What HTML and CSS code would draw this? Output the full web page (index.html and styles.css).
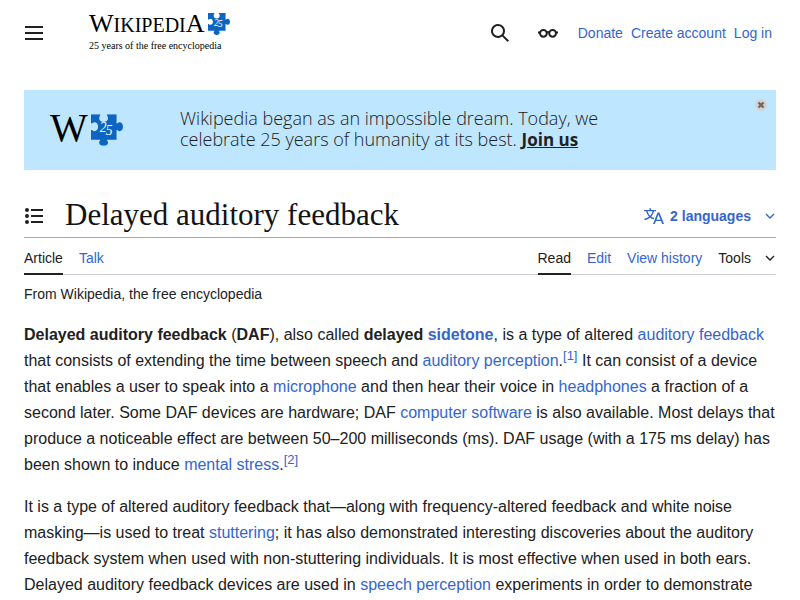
FILE: index.html
```
<!DOCTYPE html>
<html lang="en">
<head>
<meta charset="utf-8">
<meta name="viewport" content="width=device-width, initial-scale=1">
<title>Delayed auditory feedback - Wikipedia</title>
<link rel="stylesheet" href="styles.css">
</head>
<body>

<!-- puzzle piece, used in the logo and in the banner -->
<svg class="defs" aria-hidden="true">
	<symbol id="puzzle" viewBox="0 0 94 93">
		<path d="M0 0H27C29 4 24 5 24 11C24 18 30 23 37 23S50 18 50 11C50 5 45 4 47 0H75V27C79 29 78 24 84 24C90 24 94 30 94 37S90 50 84 50C78 50 79 45 75 47V75H47C45 78 50 77 50 83C50 89 44 93 37 93S24 89 24 83C24 77 29 78 27 75H0V47C4 45 5 50 10 50C17 50 21 44 21 37S17 24 10 24C5 24 4 29 0 27Z"/>
	</symbol>
</svg>

<header class="header">
	<button class="icon-button" aria-label="Main menu">
		<svg width="20" height="20" viewBox="0 0 20 20"><path d="M1 3v2h18V3zm0 8h18V9H1zm0 6h18v-2H1z"/></svg>
	</button>
	<a class="logo" href="#">
		<span class="logo-name"><span class="wordmark"><span class="cap">W</span>IKIPEDI<span class="cap">A</span></span><svg class="logo-puzzle" viewBox="0 0 94 93"><use href="#puzzle"/><text x="26" y="53">2</text><text x="43" y="60">5</text></svg></span>
		<span class="tagline">25 years of the free encyclopedia</span>
	</a>
	<nav class="user-links">
		<button class="icon-button" aria-label="Search">
			<svg width="20" height="20" viewBox="0 0 20 20"><path d="M12.2 13.6a7 7 0 1 1 1.4-1.4l5.4 5.4-1.4 1.4zM3 8a5 5 0 1 0 10 0A5 5 0 0 0 3 8"/></svg>
		</button>
		<button class="icon-button glasses" aria-label="Appearance">
			<svg width="20" height="20" viewBox="0 0 20 20"><g fill="none" stroke="#202122" stroke-width="2"><circle cx="5.4" cy="10.3" r="3.4"/><circle cx="14.6" cy="10.3" r="3.4"/><path d="M8.5 9.5q1.5-1 3 0M0 9.5h2.3M17.7 9.5H20"/></g></svg>
		</button>
		<a href="#">Donate</a>
		<a href="#">Create account</a>
		<a href="#">Log in</a>
	</nav>
</header>

<div class="banner">
	<div class="banner-logo">
		<span class="banner-w">W</span>
		<svg class="banner-puzzle" viewBox="0 0 94 93"><use href="#puzzle"/><text x="26" y="53">2</text><text x="43" y="60">5</text></svg>
	</div>
	<p class="banner-text">Wikipedia began as an impossible dream. Today, we celebrate 25 years of humanity at its best. <a href="#">Join us</a></p>
	<button class="banner-close" aria-label="Close">
		<svg width="12" height="12" viewBox="0 0 12 12"><circle cx="6" cy="6" r="6" fill="#d2d3d2"/><path d="M3.5 3.5l5 5M8.5 3.5l-5 5" stroke="#6f6964" stroke-width="2.4"/></svg>
	</button>
</div>

<main class="content">
	<div class="title-bar">
		<button class="icon-button" aria-label="Table of contents">
			<svg width="20" height="20" viewBox="0 0 20 20"><path d="M7 15h12v2H7zm0-6h12v2H7zm0-6h12v2H7z"/><circle cx="3" cy="4" r="2"/><circle cx="3" cy="10" r="2"/><circle cx="3" cy="16" r="2"/></svg>
		</button>
		<h1>Delayed auditory feedback</h1>
		<button class="languages">
			<svg width="20" height="20" viewBox="0 0 20 20"><path d="M20 18h-1.44a.6.6 0 0 1-.4-.12.8.8 0 0 1-.23-.31L17 15h-5l-1 2.54a.8.8 0 0 1-.22.3.6.6 0 0 1-.4.14H9l4.55-11.47h1.89zm-3.53-4.31L14.89 9.5a12 12 0 0 1-.39-1.24q-.09.37-.19.69l-.19.56-1.58 4.19zm-6.3-1.58a13.4 13.4 0 0 1-2.91-1.41 11.46 11.46 0 0 0 2.81-5.37H12V4H7.31a4 4 0 0 0-.2-.56C6.87 2.79 6.6 2 6.6 2l-1.47.5s.4.89.6 1.5H0v1.33h2.15A11.23 11.23 0 0 0 5 10.7a17.2 17.2 0 0 1-5 2.1q.56.82.87 1.38a23.3 23.3 0 0 0 5.22-2.51 15.6 15.6 0 0 0 3.56 1.77zM3.63 5.33h4.91a8.1 8.1 0 0 1-2.45 4.45 9.1 9.1 0 0 1-2.46-4.45"/></svg>
			<span>2 languages</span>
			<svg class="chevron" width="12" height="12" viewBox="0 0 12 12"><path d="M2 4l4 4 4-4"/></svg>
		</button>
	</div>

	<div class="toolbar">
		<nav class="tabs">
			<a class="selected" href="#">Article</a>
			<a href="#">Talk</a>
		</nav>
		<nav class="tabs">
			<a class="selected" href="#">Read</a>
			<a href="#">Edit</a>
			<a href="#">View history</a>
			<button class="tools">Tools <svg class="chevron" width="12" height="12" viewBox="0 0 12 12"><path d="M2 4l4 4 4-4"/></svg></button>
		</nav>
	</div>

	<div class="site-sub">From Wikipedia, the free encyclopedia</div>

	<div class="article">
		<p><b>Delayed auditory feedback</b> (<b>DAF</b>), also called <b>delayed <a href="#">sidetone</a></b>, is a type of altered <a href="#">auditory feedback</a> that consists of extending the time between speech and <a href="#">auditory perception</a>.<sup><a href="#">[1]</a></sup> It can consist of a device that enables a user to speak into a <a href="#">microphone</a> and then hear their voice in <a href="#">headphones</a> a fraction of a second later. Some DAF devices are hardware; DAF <a href="#">computer software</a> is also available. Most delays that produce a noticeable effect are between 50–200 milliseconds (ms). DAF usage (with a 175&nbsp;ms delay) has been shown to induce <a href="#">mental stress</a>.<sup><a href="#">[2]</a></sup></p>
		<p>It is a type of altered auditory feedback that—along with frequency-altered feedback and white noise masking—is used to treat <a href="#">stuttering</a>; it has also demonstrated interesting discoveries about the auditory feedback system when used with non-stuttering individuals. It is most effective when used in both ears. Delayed auditory feedback devices are used in <a href="#">speech perception</a> experiments in order to demonstrate</p>
	</div>
</main>

</body>
</html>
```
FILE: styles.css
```
body {
	margin: 0;
	padding: 0 24px;
	background-color: #fff;
	color: #202122;
	font-family: "Liberation Sans", Arial, sans-serif;
	font-size: 14px;
}

a {
	color: #36c;
	text-decoration: none;
}

button {
	margin: 0;
	padding: 0;
	border: 0;
	background: none;
	color: inherit;
	font: inherit;
	cursor: pointer;
}

svg {
	display: block;
	flex: none;
	fill: #202122;
}

.defs {
	position: absolute;
	width: 0;
	height: 0;
}

.chevron {
	fill: none;
	stroke: currentColor;
	stroke-width: 1.4;
}

/* header */
.header {
	display: flex;
	align-items: center;
	height: 66px;
}

.logo {
	margin-left: 45px;
	color: #000;
	font-family: "Liberation Serif", serif;
}

.logo-name {
	display: flex;
	align-items: flex-start;
	height: 26px;
	gap: 3px;
}

.wordmark {
	font-size: 20px;
	line-height: 22px;
}

.cap {
	font-size: 26px;
}

.logo-puzzle {
	width: 22px;
	height: 22px;
}

.logo-puzzle,
.banner-puzzle {
	fill: #0c65c0;
}

.tagline {
	display: block;
	font-size: 10px;
	line-height: 14px;
}

.logo-puzzle text,
.banner-puzzle text {
	fill: #fff;
	font: italic 40px "Liberation Serif", serif;
}

.user-links {
	display: flex;
	align-items: center;
	gap: 8px;
	margin-left: auto;
	padding-right: 4px;
}

.user-links .icon-button {
	margin-right: 20px;
}

.user-links .glasses {
	margin-right: 12px;
}

/* banner */
.banner {
	position: relative;
	display: flex;
	align-items: center;
	height: 80px;
	margin-top: 24px;
	background-color: #bee6ff;
}

.banner-logo {
	display: flex;
	align-items: center;
	width: 130px;
	padding-left: 26px;
	gap: 3px;
}

.banner-w {
	padding-bottom: 4px;
	color: #000;
	font: 40px/36px "Liberation Serif", serif;
}

.banner-puzzle {
	width: 32px;
	height: 32px;
}

.banner-text {
	max-width: 440px;
	margin: 0;
	padding-bottom: 2px;
	font-family: "Open Sans", sans-serif;
	font-size: 18px;
	font-weight: 300;
	line-height: 21px;
}

.banner-text a {
	color: #202122;
	font-size: 17px;
	font-weight: bold;
	text-decoration: underline;
}

.banner-close {
	position: absolute;
	top: 9px;
	right: 9px;
}

/* title */
.title-bar {
	display: flex;
	align-items: center;
	height: 43px;
	margin-top: 24px;
	border-bottom: 1px solid #a2a9b1;
}

h1 {
	margin: 0 0 0 21px;
	padding-bottom: 2px;
	color: #101418;
	font-family: "Liberation Serif", serif;
	font-size: 31px;
	font-weight: normal;
	line-height: 36px;
}

.languages {
	display: flex;
	align-items: center;
	gap: 6px;
	margin-left: auto;
	color: #36c;
	font-weight: bold;
}

.languages svg {
	fill: #36c;
}

.languages .chevron {
	margin-left: 7px;
	fill: none;
}

/* tabs */
.toolbar {
	display: flex;
	justify-content: space-between;
	border-bottom: 1px solid #c8ccd1;
}

.tabs {
	display: flex;
	gap: 16px;
	margin-bottom: -1px;
}

.tabs a {
	padding: 12px 0 7px;
	border-bottom: 2px solid transparent;
	line-height: 16px;
}

.tabs .selected {
	border-bottom-color: #202122;
	color: #202122;
}

.tools {
	display: flex;
	align-items: center;
	gap: 13px;
	padding-top: 3px;
}

/* article */
.site-sub {
	margin-top: 11px;
	line-height: 16px;
}

.article {
	margin-top: 20px;
	font-size: 16px;
	line-height: 26px;
}

.article p {
	margin: 0 0 16px;
}

.article sup {
	font-size: 13px;
	line-height: 1;
}
```
